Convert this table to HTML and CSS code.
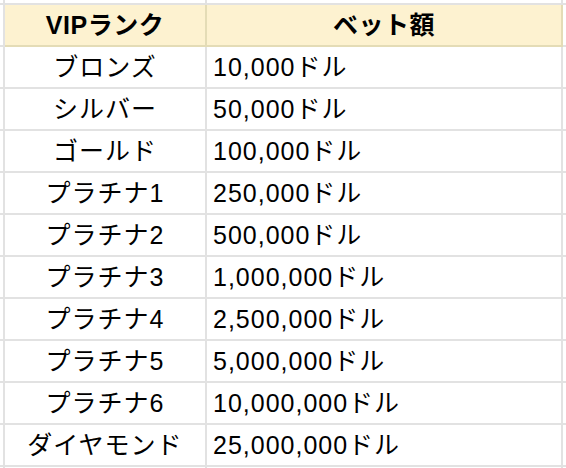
FILE: index.html
```html
<!DOCTYPE html>
<html lang="ja">
<head>
<meta charset="utf-8">
<link rel="stylesheet" href="styles.css">
</head>
<body>
<table class="sheet">
  <colgroup>
    <col class="c-edge-l"><col class="c-rank"><col class="c-bet"><col class="c-edge-r">
  </colgroup>
  <tr class="r-pad"><td></td><td></td><td></td><td></td></tr>
  <tr class="r-head">
    <td class="edge"></td><th class="h-rank">VIPランク</th><th class="h-bet">ベット額</th><td class="edge"></td>
  </tr>
  <tr><td></td><td class="rank">ブロンズ</td><td class="bet">10,000ドル</td><td></td></tr>
  <tr><td></td><td class="rank">シルバー</td><td class="bet">50,000ドル</td><td></td></tr>
  <tr><td></td><td class="rank">ゴールド</td><td class="bet">100,000ドル</td><td></td></tr>
  <tr><td></td><td class="rank">プラチナ1</td><td class="bet">250,000ドル</td><td></td></tr>
  <tr><td></td><td class="rank">プラチナ2</td><td class="bet">500,000ドル</td><td></td></tr>
  <tr><td></td><td class="rank">プラチナ3</td><td class="bet">1,000,000ドル</td><td></td></tr>
  <tr><td></td><td class="rank">プラチナ4</td><td class="bet">2,500,000ドル</td><td></td></tr>
  <tr><td></td><td class="rank">プラチナ5</td><td class="bet">5,000,000ドル</td><td></td></tr>
  <tr><td></td><td class="rank">プラチナ6</td><td class="bet">10,000,000ドル</td><td></td></tr>
  <tr><td></td><td class="rank">ダイヤモンド</td><td class="bet">25,000,000ドル</td><td></td></tr>
  <tr class="r-end"><td></td><td></td><td></td><td></td></tr>
</table>
</body>
</html>
```
FILE: styles.css
```css
html, body {
  margin: 0;
  padding: 0;
  background: #ffffff;
  overflow: hidden;
  width: 566px;
  height: 468px;
}

.sheet {
  border-collapse: collapse;
  table-layout: fixed;
  width: 627px;
  margin-left: -57px;
  margin-top: -39px;
  font-family: "Liberation Sans", Arial, "Noto Sans CJK JP", sans-serif;
  font-size: 25px;
  letter-spacing: 1px;
  color: #000;
}

.c-edge-l { width: 60px; }
.c-rank { width: 202px; }
.c-bet { width: 356px; }
.c-edge-r { width: 9px; }

.sheet td,
.sheet th {
  border: 2px solid #e2e2e2;
  height: 40px;
  padding: 0;
  box-sizing: border-box;
  line-height: 40px;
  white-space: nowrap;
  overflow: hidden;
}

.sheet tr {
  height: 42px;
}

.sheet .r-end {
  height: 2px;
}

.sheet .r-end td {
  height: 2px;
  line-height: 0;
  border-bottom: 0;
}

.r-head th {
  background: #fdf2d0;
  border-color: #e4dcb6;
  font-weight: 700;
  text-align: center;
  letter-spacing: 0.5px;
}

.rank {
  text-align: center;
}

.bet {
  text-align: left;
  padding-left: 6px !important;
}
```
